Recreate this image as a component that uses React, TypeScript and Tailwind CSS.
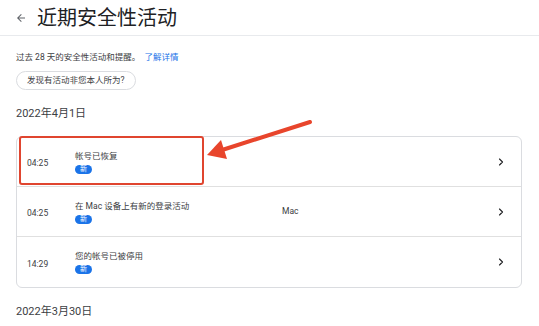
import { ChevronRight } from "lucide-react";

type Activity = {
  time: string;
  title: string;
  device?: string;
};

const activities: Activity[] = [
  { time: "04:25", title: "帐号已恢复" },
  { time: "04:25", title: "在 Mac 设备上有新的登录活动", device: "Mac" },
  { time: "14:29", title: "您的帐号已被停用" },
];

const NewBadge = () => (
  <span className="mt-[3px] flex h-[9px] w-[17px] items-center justify-center rounded-full bg-[#1a73e8] text-[7px] leading-none text-white">
    新
  </span>
);

const ActivityRow = ({ item, last }: { item: Activity; last: boolean }) => (
  <div
    className={`flex h-[50px] items-center pl-[10px] pr-[14px] ${
      last ? "" : "border-b border-[#e0e0e0]"
    }`}
  >
    <div className="w-[48px] pt-[4px] text-[8.5px] text-[#3c4043]">{item.time}</div>
    <div className="flex w-[207px] flex-col items-start">
      <div className="text-[8.5px] leading-[12px] text-[#3c4043]">{item.title}</div>
      <NewBadge />
    </div>
    <div className="flex-1 text-[8.5px] text-[#3c4043]">{item.device}</div>
    <ChevronRight className="h-[12px] w-[12px] text-[#202124]" strokeWidth={2.25} />
  </div>
);

export default function App() {
  return (
    <div
      className="relative h-[326px] w-[539px] overflow-hidden bg-white"
      style={{ fontFamily: 'Roboto, "Noto Sans CJK SC", sans-serif' }}
    >
      <div className="flex h-[36px] items-center gap-[10px] border-b border-[#e8eaed] px-[15px]">
        <svg width="12" height="12" viewBox="0 0 24 24" className="text-[#5f6368]">
          <path d="M20 11H7.83l5.59-5.59L12 4l-8 8 8 8 1.41-1.41L7.83 13H20v-2z" fill="currentColor" />
        </svg>
        <h1 className="text-[20px] leading-none text-[#202124]">近期安全性活动</h1>
      </div>

      <div className="px-[16px]">
        <p className="mt-[15px] text-[8.5px] text-[#3c4043]">
          过去 28 天的安全性活动和提醒。 <span className="ml-[2px] text-[#1a73e8]">了解详情</span>
        </p>
        <button className="mt-[7px] flex h-[19px] items-center rounded-full border border-[#dadce0] px-[10px] text-[8.5px] text-[#3c4043]">
          发现有活动非您本人所为?
        </button>

        <h2 className="mt-[16px] text-[11px] text-[#3c4043]">2022年4月1日</h2>

        <div className="relative mt-[14px] w-[506px] rounded-[6px] border border-[#dadce0]">
          {activities.map((a, i) => (
            <ActivityRow key={i} item={a} last={i === activities.length - 1} />
          ))}
          <div className="absolute left-[2px] top-[-1px] h-[49px] w-[185px] rounded-[3px] border-2 border-[#e0452f]" />
        </div>

        <h2 className="mt-[16px] text-[11px] text-[#3c4043]">2022年3月30日</h2>
      </div>

      <svg className="absolute left-0 top-0" width="539" height="326" viewBox="0 0 539 326">
        <line x1="310" y1="122" x2="219" y2="151" stroke="#e8452c" strokeWidth="4" strokeLinecap="round" />
        <polygon points="207,155 221,140 227,159" fill="#e8452c" />
      </svg>
    </div>
  );
}
